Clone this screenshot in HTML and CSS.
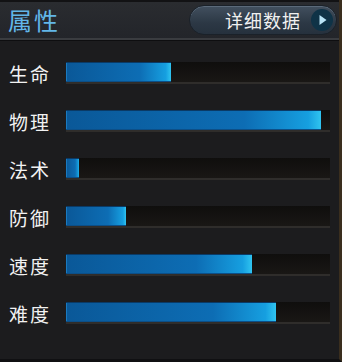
FILE: index.html
```html
<!DOCTYPE html>
<html>
<head>
<meta charset="utf-8">
<link rel="stylesheet" href="styles.css">
</head>
<body>
<div class="panel">
  <div class="header">
    <div class="title">属性</div>
    <div class="detail-btn">
      <span class="btn-text">详细数据</span>
      <span class="btn-icon"><svg width="22" height="22" viewBox="0 0 22 22"><circle cx="11" cy="11" r="11" fill="#0f3347"/><path d="M8.5 6 L15.5 11 L8.5 16 Z" fill="#b9e4f6"/></svg></span>
    </div>
  </div>
  <div class="stats">
    <div class="row"><span class="label">生命</span><div class="track"><div class="fill" style="width:105px"></div></div></div>
    <div class="row"><span class="label">物理</span><div class="track"><div class="fill" style="width:255px"></div></div></div>
    <div class="row"><span class="label">法术</span><div class="track"><div class="fill" style="width:13px"></div></div></div>
    <div class="row"><span class="label">防御</span><div class="track"><div class="fill" style="width:60px"></div></div></div>
    <div class="row"><span class="label">速度</span><div class="track"><div class="fill" style="width:186px"></div></div></div>
    <div class="row"><span class="label">难度</span><div class="track"><div class="fill" style="width:210px"></div></div></div>
  </div>
</div>
</body>
</html>
```
FILE: styles.css
```css
html, body {
  margin: 0;
  padding: 0;
  background: #1b1b1d;
}
.panel {
  width: 342px;
  height: 362px;
  box-sizing: border-box;
  background: #1c1c1e;
  border-right: 3px solid #3a2e1e;
  border-bottom: 3px solid #101012;
  font-family: "Noto Sans CJK SC", "Noto Sans", sans-serif;
  overflow: hidden;
}
.header {
  height: 40px;
  box-sizing: border-box;
  background: linear-gradient(#2a2c30, #23252a);
  border-top: 2px solid #121214;
  border-bottom: 2px solid #3a3c40;
  box-shadow: 0 1px 0 #0e0e10;
  display: flex;
  align-items: center;
  justify-content: space-between;
  padding: 0 2px 0 8px;
}
.title {
  color: #62b6e8;
  font-size: 24px;
  letter-spacing: 2px;
  line-height: 1;
}
.detail-btn {
  width: 148px;
  height: 30px;
  box-sizing: border-box;
  border-radius: 15px;
  background: linear-gradient(#42505f, #2c3845 60%, #26313d);
  border: 1px solid #1a2129;
  box-shadow: inset 0 1px 0 #5b6a7a;
  display: flex;
  align-items: center;
  justify-content: flex-end;
  padding-right: 3px;
  gap: 10px;
}
.btn-text {
  color: #f0f0f0;
  font-size: 18px;
  letter-spacing: 1px;
  line-height: 1;
}
.btn-icon {
  display: flex;
}
.stats {
  padding-top: 9px;
  display: flex;
  flex-direction: column;
}
.row {
  height: 48px;
  display: flex;
  align-items: center;
  padding-left: 9px;
}
.label {
  width: 57px;
  color: #f2f2f2;
  font-size: 19px;
  letter-spacing: 2px;
  line-height: 1;
}
.track {
  width: 264px;
  height: 22px;
  box-sizing: border-box;
  background: linear-gradient(#0f0e0d, #191715);
  border-bottom: 2px solid #2f2d2b;
}
.fill {
  height: 20px;
  box-sizing: border-box;
  background: linear-gradient(90deg, #0a5898 0%, #0d6db4 70%, #169fe0 95%, #30c4f0 100%);
  border-top: 1px solid #0a3a66;
  border-bottom: 1px solid #0c4f88;
  box-shadow: inset 1px 0 0 #1a7ac0;
}
```
